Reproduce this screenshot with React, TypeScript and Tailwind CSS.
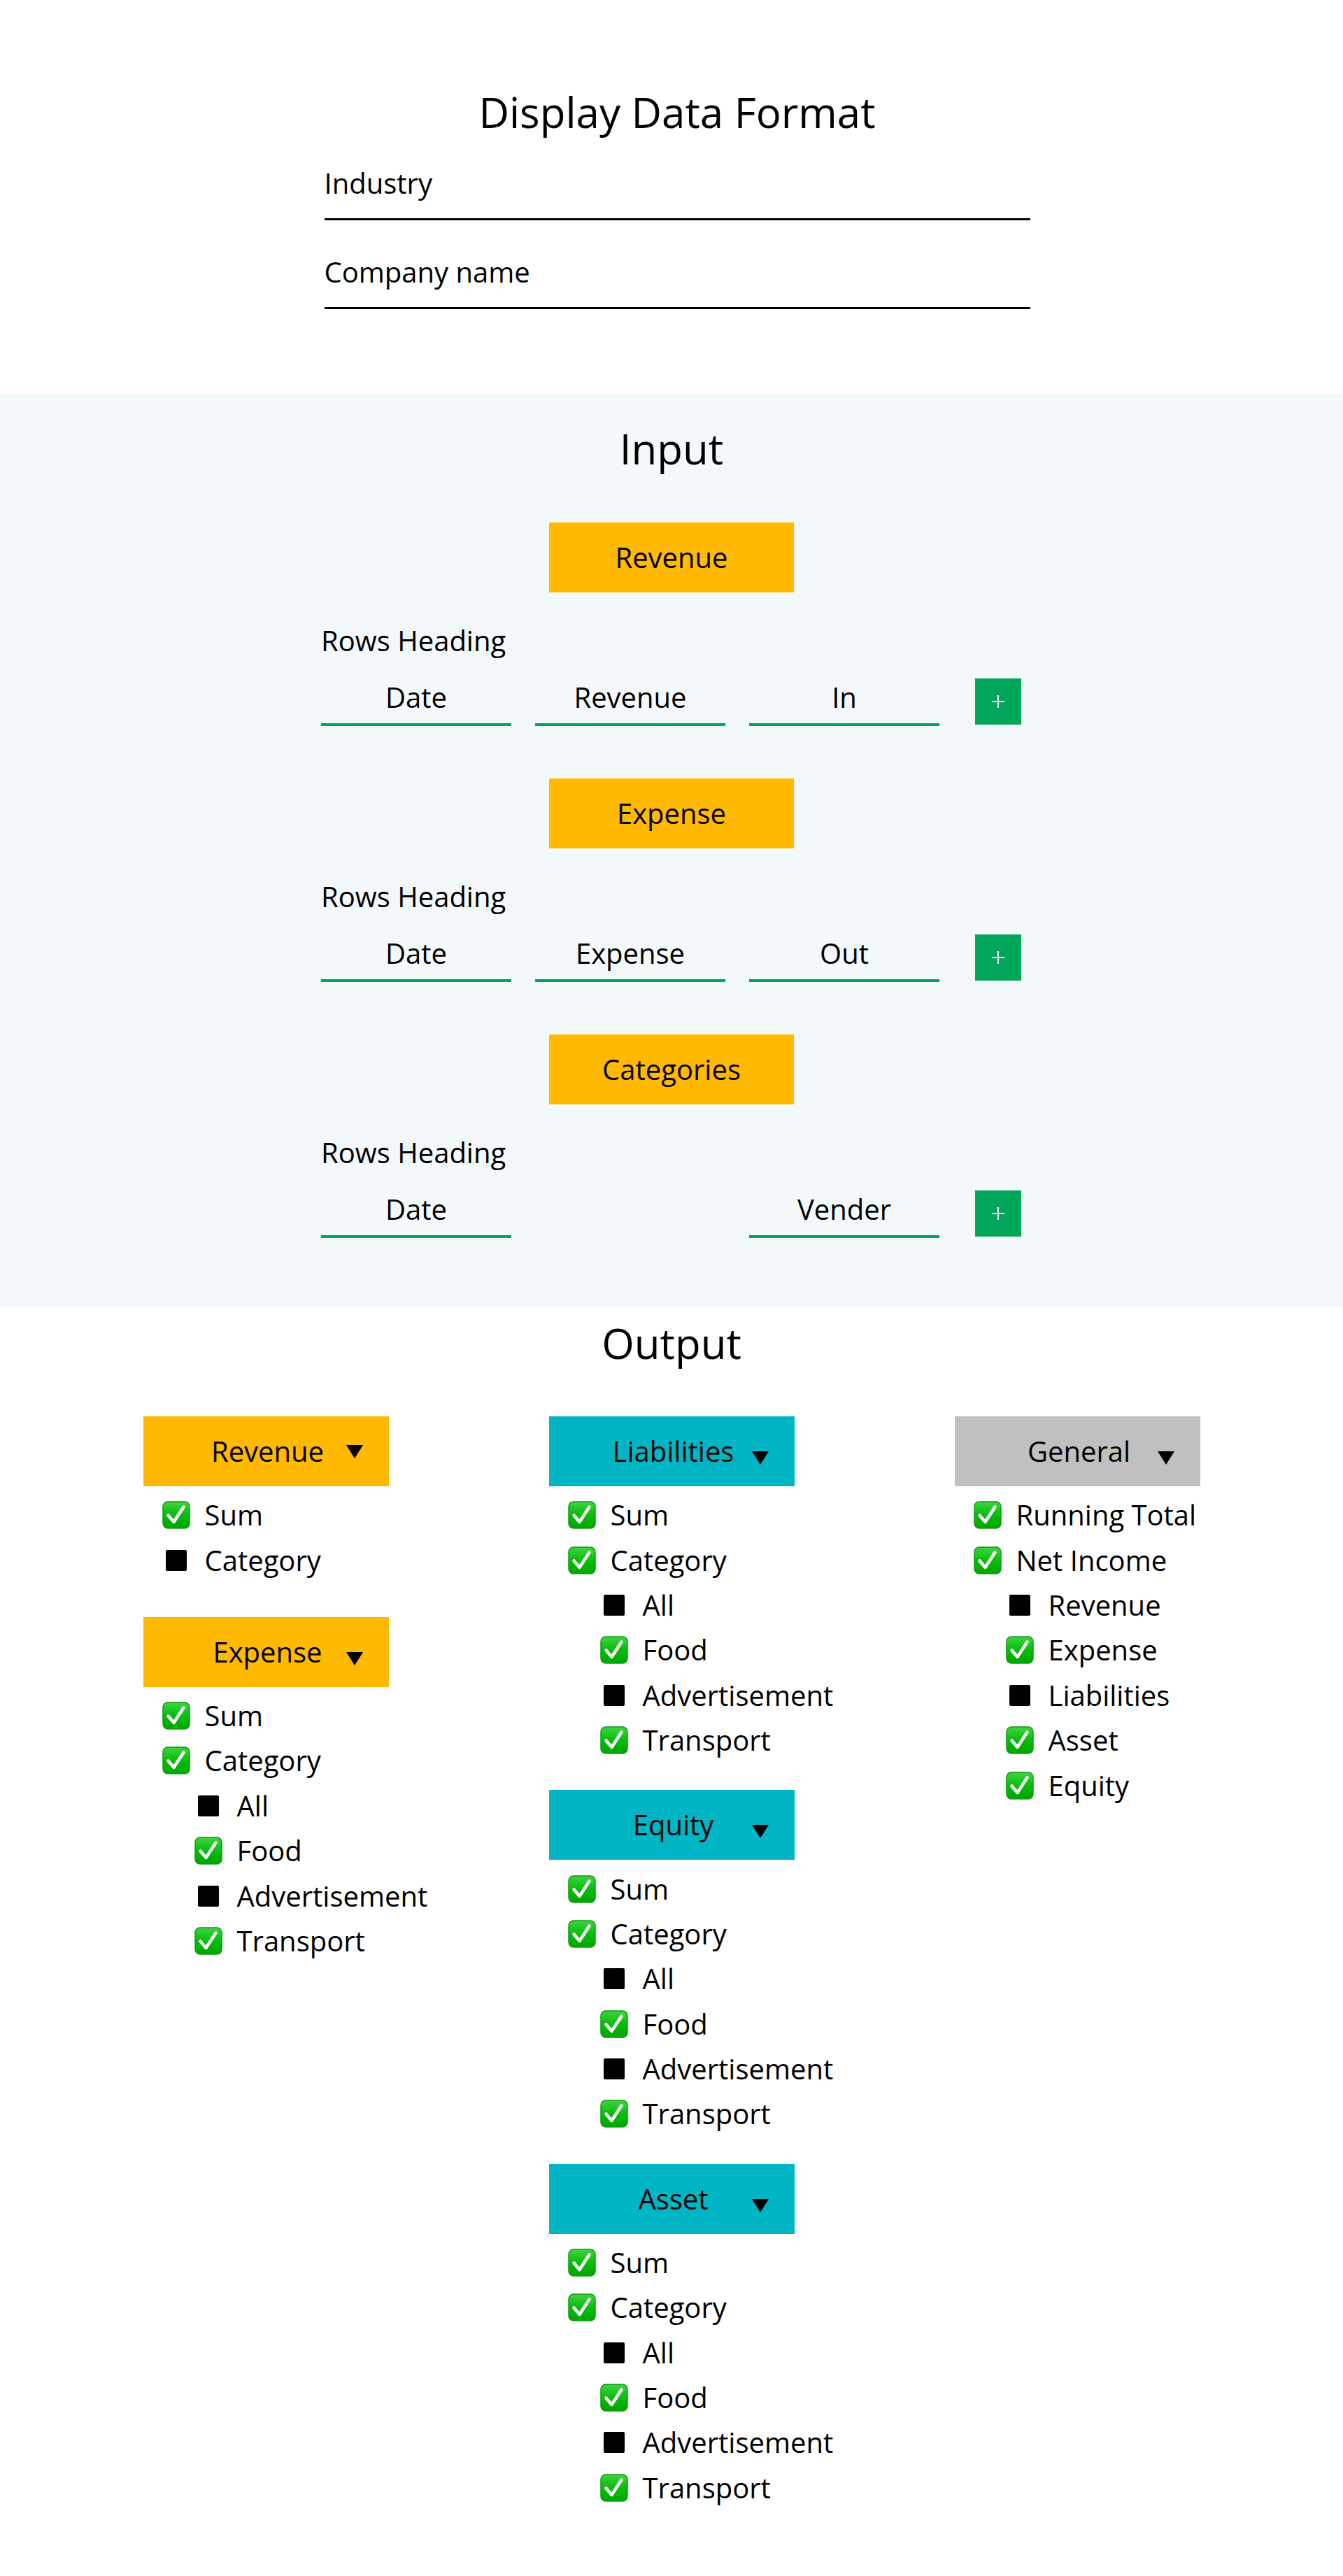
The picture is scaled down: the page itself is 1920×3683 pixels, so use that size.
import { useId } from "react";

type Item = {
    label: string;
    checked: boolean;
    sub?: boolean;
};

type Group = {
    title: string;
    color: string;
    high?: boolean;
    spacing: string;
    items: Item[];
};

const categoryItems: Item[] = [
    { label: "Sum", checked: true },
    { label: "Category", checked: true },
    { label: "All", checked: false, sub: true },
    { label: "Food", checked: true, sub: true },
    { label: "Advertisement", checked: false, sub: true },
    { label: "Transport", checked: true, sub: true },
];

const columns: Group[][] = [
    [
        {
            title: "Revenue",
            color: "bg-[#ffb900]",
            high: true,
            spacing: "mb-[49px]",
            items: [
                { label: "Sum", checked: true },
                { label: "Category", checked: false },
            ],
        },
        { title: "Expense", color: "bg-[#ffb900]", spacing: "mb-[39px]", items: categoryItems },
    ],
    [
        { title: "Liabilities", color: "bg-[#00b5c4]", spacing: "mb-[39px]", items: categoryItems },
        { title: "Equity", color: "bg-[#00b5c4]", spacing: "mb-[39px]", items: categoryItems },
        { title: "Asset", color: "bg-[#00b5c4]", spacing: "mb-[39px]", items: categoryItems },
    ],
    [
        {
            title: "General",
            color: "bg-[#c0c0c0]",
            spacing: "mb-[39px]",
            items: [
                { label: "Running Total", checked: true },
                { label: "Net Income", checked: true },
                { label: "Revenue", checked: false, sub: true },
                { label: "Expense", checked: true, sub: true },
                { label: "Liabilities", checked: false, sub: true },
                { label: "Asset", checked: true, sub: true },
                { label: "Equity", checked: true, sub: true },
            ],
        },
    ],
];

const inputGroups = [
    { title: "Revenue", fields: ["Date", "Revenue", "In"] },
    { title: "Expense", fields: ["Date", "Expense", "Out"] },
    { title: "Categories", fields: ["Date", "", "Vender"] },
];

function CheckIcon() {
    const id = useId();
    return (
        <svg width="40" height="40" viewBox="0 0 40 40">
            <defs>
                <linearGradient id={id} x1="0" y1="0" x2="0" y2="1">
                    <stop offset="0" stopColor="#3fd443" />
                    <stop offset="0.5" stopColor="#06bd0a" />
                    <stop offset="1" stopColor="#00a600" />
                </linearGradient>
            </defs>
            <rect x="1" y="1" width="38" height="38" rx="7" fill={`url(#${id})`} stroke="#109a14" strokeWidth="1.5" />
            <path
                d="M8.5 20.5 L16.5 30 L30.5 8.5"
                fill="none"
                stroke="#ffffff"
                strokeWidth="4.5"
                strokeLinecap="round"
                strokeLinejoin="round"
            />
        </svg>
    );
}

function Caret() {
    return (
        <svg width="24" height="19" viewBox="0 0 24 19">
            <polygon points="0,0 24,0 12,19" fill="#000000" />
        </svg>
    );
}

function PlusButton() {
    return (
        <button
            type="button"
            aria-label="Add"
            className="mb-[2px] flex h-[66px] w-[66px] shrink-0 items-center justify-center bg-[#00a65a]"
        >
            <svg width="18" height="18" viewBox="0 0 18 18">
                <rect x="0" y="8" width="18" height="2" fill="#ffffff" />
                <rect x="8" y="0" width="2" height="18" fill="#ffffff" />
            </svg>
        </button>
    );
}

function OutputGroup({ group }: { group: Group }) {
    return (
        <div className={group.spacing}>
            <div className={`relative flex h-[100px] w-[351px] items-center justify-center pl-[5px] ${group.color}`}>
                <span className="text-[40px] leading-[56px]">{group.title}</span>
                <div className={`absolute left-[290px] ${group.high ? "top-[41px]" : "top-[50px]"}`}>
                    <Caret />
                </div>
            </div>
            <ul className="pt-[9px]">
                {group.items.map((item, index) => (
                    <li
                        key={index}
                        className={`flex h-[64.4px] items-center whitespace-nowrap ${item.sub ? "pl-[73px]" : "pl-[27px]"}`}
                    >
                        <span className="flex h-[40px] w-[40px] shrink-0 items-center justify-center">
                            {item.checked ? (
                                <CheckIcon />
                            ) : (
                                <span className="block h-[30px] w-[30px] rounded-[2px] bg-black" />
                            )}
                        </span>
                        <span className="ml-[21px] shrink-0 text-[40px] leading-[64px]">{item.label}</span>
                    </li>
                ))}
            </ul>
        </div>
    );
}

export default function App() {
    return (
        <div className="min-h-[3683px] bg-white font-['Open_Sans',sans-serif] text-black">
            {/* Display data format */}
            <section className="h-[563px] pt-[120px]">
                <div className="mx-auto w-[1025px] pl-[16px]">
                    <h1 className="text-center text-[60px] font-normal leading-[80px]">Display Data Format</h1>
                    <div className="mt-[34px] border-b-[3px] border-black pb-[22px] text-[40px] leading-[56px]">
                        Industry
                    </div>
                    <div className="mt-[46px] border-b-[3px] border-black pb-[22px] text-[40px] leading-[56px]">
                        Company name
                    </div>
                </div>
            </section>

            {/* Input */}
            <section className="bg-[#f3f8fa] pb-[98px] pt-[38px]">
                <h2 className="text-center text-[60px] font-normal leading-[80px]">Input</h2>
                <div className="mx-auto w-[1002px]">
                    {inputGroups.map((group, gi) => (
                        <div key={group.title} className={gi === 0 ? "mt-[66px]" : "mt-[75px]"}>
                            <div className="mx-auto flex h-[100px] w-[350px] items-center justify-center bg-[#ffb900] text-[40px] leading-[56px]">
                                {group.title}
                            </div>
                            <div className="mt-[41px] text-[40px] leading-[56px]">Rows Heading</div>
                            <div className="mt-[25px] flex items-end">
                                <div className="flex gap-[34px]">
                                    {group.fields.map((field, fi) => (
                                        <div
                                            key={fi}
                                            className={`h-[69px] w-[272px] pb-[9px] text-center text-[40px] leading-[56px] ${
                                                field ? "border-b-[4px] border-[#00a65a]" : ""
                                            }`}
                                        >
                                            {field}
                                        </div>
                                    ))}
                                </div>
                                <div className="ml-[51px]">
                                    <PlusButton />
                                </div>
                            </div>
                        </div>
                    ))}
                </div>
            </section>

            {/* Output */}
            <section className="pb-[90px] pt-[12px]">
                <h2 className="text-center text-[60px] font-normal leading-[80px]">Output</h2>
                <div className="mx-auto mt-[65px] flex w-[1511px] justify-between">
                    {columns.map((col, ci) => (
                        <div key={ci} className="w-[351px]">
                            {col.map((group) => (
                                <OutputGroup key={group.title} group={group} />
                            ))}
                        </div>
                    ))}
                </div>
            </section>
        </div>
    );
}
